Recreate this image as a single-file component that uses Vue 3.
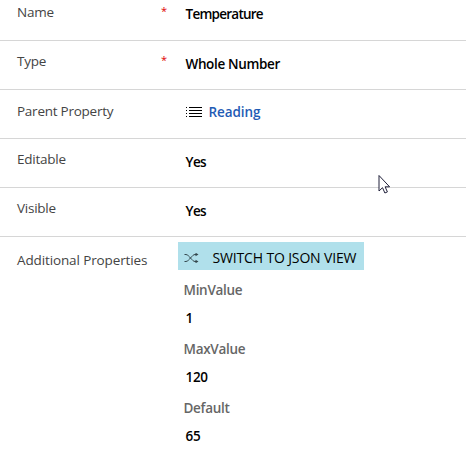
<script setup>
const rows = [
  { key: 'name', label: 'Name', value: 'Temperature', required: true },
  { key: 'type', label: 'Type', value: 'Whole Number', required: true },
  { key: 'parent', label: 'Parent Property', value: 'Reading', link: true },
  { key: 'editable', label: 'Editable', value: 'Yes' },
  { key: 'visible', label: 'Visible', value: 'Yes' },
]
const extras = [
  { key: 'min', label: 'MinValue', value: '1' },
  { key: 'max', label: 'MaxValue', value: '120' },
  { key: 'default', label: 'Default', value: '65' },
]
</script>

<template>
  <main class="form">
    <div v-for="r in rows" :key="r.key" class="row" :class="r.key">
      <div class="label">{{ r.label }}</div>
      <div class="req"><span v-if="r.required">*</span></div>
      <div class="value">
        <svg v-if="r.link" class="list" width="16" height="12" viewBox="0 0 16 12" shape-rendering="crispEdges">
          <path d="M0 1h1v1H0zM0 4h1v1H0zM0 7h1v1H0zM0 10h1v1H0zM3 1h13v1H3zM3 4h13v1H3zM3 7h13v1H3zM3 10h13v1H3z" />
        </svg>
        <span>{{ r.value }}</span>
      </div>
    </div>
    <div class="row extra">
      <div class="label">Additional Properties</div>
      <div class="panel">
        <button class="switch">
          <svg width="15" height="10" viewBox="0 0 15 10" fill="none" stroke="#34474d" stroke-width="1">
            <path d="M0.500 1.500h1.500C5.500 2 8 8.500 11 8.500h1.500M0.500 8.500h1.500C5.500 8 8 1.500 11 1.500h1.500" />
            <path d="M11.500 -0.300l3 1.800-3 1.800zM11.500 6.700l3 1.800-3 1.800z" fill="#34474d" stroke="none" />
          </svg>
          <span class="caption">SWITCH TO JSON VIEW</span>
        </button>
        <dl>
          <template v-for="e in extras" :key="e.key">
            <dt>{{ e.label }}</dt>
            <dd>{{ e.value }}</dd>
          </template>
        </dl>
      </div>
    </div>
    <svg class="cursor" width="13" height="20" viewBox="0 0 13 20">
      <path d="M1 1.500v15.500l3.500-3.300 2.400 5.300 2.500-1.100-2.300-5.100h4.500z" fill="#fff" stroke="#20203a" stroke-width="1" />
    </svg>
  </main>
</template>

<style>
body { background: #fff; }
</style>
<style scoped>
.form {
  position: relative;
  height: 454px;
  overflow: hidden;
  font: 13.5px/20px "Open Sans", "Noto Sans", sans-serif;
  color: #000;
}
.row {
  display: grid;
  grid-template-columns: 144px 25px 1fr;
  box-sizing: border-box;
  height: 49px;
  padding-left: 17px;
  border-bottom: 1px solid #d6d6d6;
  align-items: start;
}
.label { padding-top: 10px; color: #444; white-space: nowrap; letter-spacing: -0.25px; }
.req { padding-top: 9px; color: #e00000; font-size: 11px; }
.value { display: flex; padding-top: 13px; font-weight: 600; letter-spacing: -0.6px; }
.value span { margin-left: -0.5px; }
.name { height: 41px; }
.name .label { padding-top: 2px; }
.name .req { padding-top: 1px; }
.name .value { padding-top: 4px; letter-spacing: -0.75px; }
.type .value { letter-spacing: -0.36px; }
.parent .label { padding-top: 11px; }
.parent .value { padding-top: 12px; color: #1f5bb5; letter-spacing: -0.1px; }
.list { margin: 4px 7px 0 0; fill: #000; }
.extra { height: 217px; border: 0; grid-template-columns: 161px 1fr; }
.extra .label { padding-top: 13px; letter-spacing: -0.12px; }
.panel { padding-top: 5px; }
.switch {
  display: flex;
  align-items: center;
  width: 186px;
  height: 28px;
  padding: 4px 0 0 6px;
  gap: 13.5px;
  border: 0;
  background: #b0e0eb;
  font: inherit;
  color: #000;
  white-space: nowrap;
}
.switch svg { flex: none; margin-top: -1px; }
.caption { font-size: 14px; letter-spacing: -0.15px; }
dl { margin: 10px 0 0 5.5px; font-weight: 600; letter-spacing: -0.3px; }
dt { height: 28px; color: #666; }
dd { height: 31px; margin: 0 0 0 2px; }
.cursor { position: absolute; left: 378px; top: 174px; }
</style>
